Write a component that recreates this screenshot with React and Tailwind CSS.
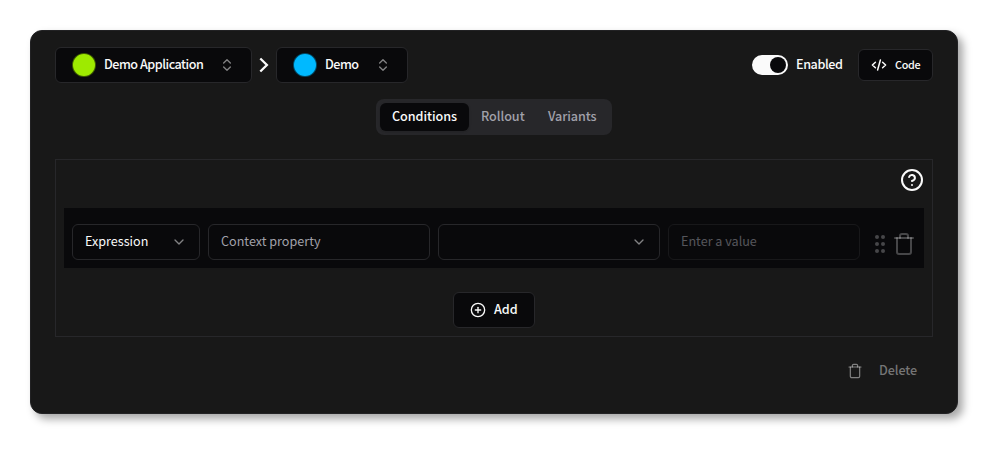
import React from "react";
import { ChevronDown, ChevronsUpDown, CirclePlus } from "lucide-react";

function Trash({ size, weight, className }) {
  return (
    <svg width={size} height={size} viewBox="0 0 24 24" fill="none" strokeWidth={weight} strokeLinecap="round" strokeLinejoin="round" className={className}>
      <path d="M3 6h18" />
      <path d="M19 6v14a2 2 0 0 1-2 2H7a2 2 0 0 1-2-2V6" />
      <path d="M8 6V4a2 2 0 0 1 2-2h4a2 2 0 0 1 2 2v2" />
    </svg>
  );
}

function Grip() {
  return (
    <svg width="10" height="18" viewBox="0 0 10 18" className="fill-[#464649]">
      {[2, 9, 16].map((y) => (
        <React.Fragment key={y}>
          <circle cx="2" cy={y} r="2" />
          <circle cx="8" cy={y} r="2" />
        </React.Fragment>
      ))}
    </svg>
  );
}

function Picker({ color, label, className }) {
  return (
    <button className={`flex h-9 items-center rounded-md border border-[#27272a] bg-[#09090b] pl-4 pr-4 font-medium ${className}`}>
      <span className={`size-6 shrink-0 rounded-full border border-black/60 ${color}`} />
      <span className="mb-0.5 ml-2 whitespace-nowrap tracking-[-0.48px]">{label}</span>
      <ChevronsUpDown className="ml-auto size-4 shrink-0 opacity-50" />
    </button>
  );
}

export default function App() {
  return (
    <div className="h-[456px] w-[1000px] bg-white p-[30px] font-['Noto_Sans_CJK_SC',sans-serif] text-[12.6px] leading-5 text-[#fafafa]">
      <main className="flex h-96 w-[928px] flex-col rounded-xl border border-[#222224] bg-[#181818] px-6 pt-4 shadow-[5px_5px_8px_rgba(0,0,0,0.35)]">
        <header className="flex h-9 items-center">
          <Picker color="bg-[#9eea00]" label="Demo Application" className="w-[197px]" />
          <svg width="24" height="24" viewBox="0 0 24 24" fill="none" stroke="currentColor" strokeWidth="2.3" className="shrink-0">
            <path d="m8.3 5.5 6.6 6.5-6.6 6.5" />
          </svg>
          <Picker color="bg-[#00b9ff]" label="Demo" className="w-[132px]" />
          <span className="ml-auto flex h-5 w-9 items-center justify-end rounded-full border-2 border-[#fafafa] bg-[#fafafa]">
            <span className="size-4 rounded-full bg-[#09090b]" />
          </span>
          <span className="mb-0.5 ml-2 w-[62px] font-medium tracking-[-0.4px]">Enabled</span>
          <button className="flex h-8 w-[75px] items-center rounded-md border border-[#27272a] bg-[#09090b] pl-3 text-[10.8px] font-medium">
            <svg width="16" height="16" viewBox="0 0 16 16" fill="none" stroke="currentColor" strokeWidth="1.5" strokeLinecap="round" strokeLinejoin="round">
              <path d="m4.4 5.2-3 2.8 3 2.8M11.6 5.2l3 2.8-3 2.8M9.4 3l-2.8 10" />
            </svg>
            <span className="mb-0.5 ml-2 tracking-[-0.3px]">Code</span>
          </button>
        </header>

        <nav className="ml-[321px] mt-4 flex h-9 w-[236px] items-center rounded-lg bg-[#27272a] p-1 font-medium text-[#a1a1aa]">
          <span className="flex h-7 w-[89px] shrink-0 items-center rounded-md bg-[#09090b] pb-0.5 pl-3 tracking-[-0.05px] text-[#fafafa] shadow">Conditions</span>
          <span className="w-[67px] shrink-0 pb-0.5 pl-3 tracking-[-0.05px]">Rollout</span>
          <span className="w-[72px] shrink-0 pb-0.5 pl-3 tracking-[-0.1px]">Variants</span>
        </nav>

        <section className="mt-6 flex h-[178px] flex-col border border-[#27272a] p-2">
          <svg width="24" height="24" viewBox="0 0 24 24" fill="none" stroke="currentColor" strokeWidth="2" strokeLinecap="round" strokeLinejoin="round" className="self-end">
            <circle cx="12" cy="12" r="10" />
            <path d="M9.09 9a3 3 0 0 1 5.83 1c0 2-3 3-3 3" />
            <path d="M12 17h.01" />
          </svg>
          <div className="mt-4 flex h-[60px] gap-2 bg-[#09090b] px-2 pt-4">
            <div className="flex h-9 w-32 items-center justify-between rounded-md border border-[#27272a] px-3">
              <span className="mb-0.5">Expression</span>
              <ChevronDown className="size-4 opacity-50" />
            </div>
            <div className="flex h-9 w-[222px] items-center rounded-md border border-[#27272a] px-3 pb-0.5 text-[#a1a1aa]">Context property</div>
            <div className="flex h-9 w-[222px] items-center justify-end rounded-md border border-[#27272a] px-3">
              <ChevronDown className="size-4 opacity-50" />
            </div>
            <div className="flex h-9 w-48 items-center rounded-md border border-[#27272a] px-3 pb-0.5 text-[#a1a1aa] opacity-50">Enter a value</div>
            <div className="flex h-10 items-center gap-[7px] pl-[7px]">
              <Grip />
              <Trash size={24} weight={2} className="stroke-white/25" />
            </div>
          </div>
          <button className="mt-6 flex h-9 w-[82px] shrink-0 items-center self-center rounded-md border border-[#27272a] bg-[#09090b] pl-4 font-medium">
            <CirclePlus className="size-4" />
            <span className="mb-0.5 ml-2">Add</span>
          </button>
        </section>

        <button className="mt-6 flex h-5 w-[86px] items-center gap-4 self-end font-medium text-[#757575]">
          <Trash size={16} weight={1.8} className="stroke-white/45" />
          <span className="mb-0.5 tracking-[-0.1px]">Delete</span>
        </button>
      </main>
    </div>
  );
}
